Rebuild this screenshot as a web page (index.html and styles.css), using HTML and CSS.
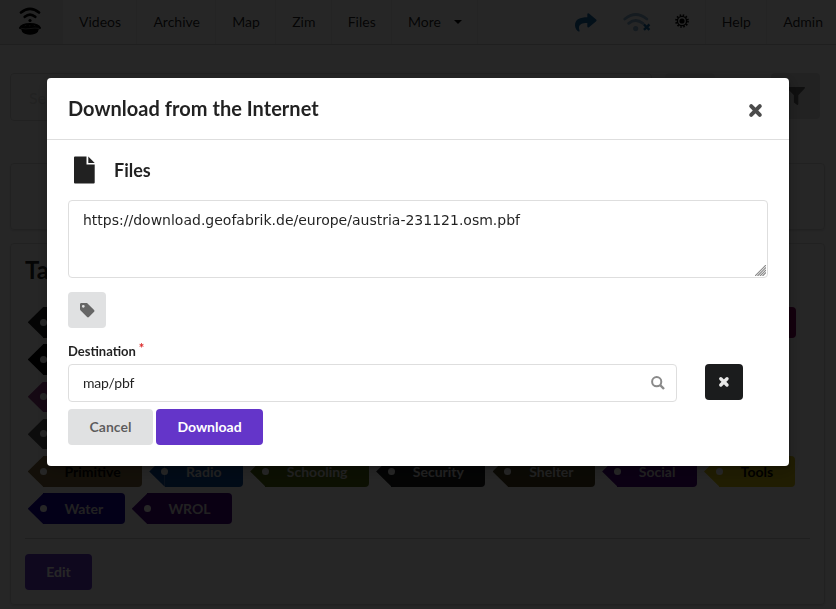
FILE: index.html
```html
<!DOCTYPE html>
<html lang="en">
<head>
<meta charset="utf-8">
<title>Files</title>
<link rel="stylesheet" href="styles.css">
</head>
<body>
<nav class="menu">
  <a class="item brand">
    <svg width="24" height="28" viewBox="0 0 24 28" fill="none" stroke="#000" stroke-width="2.7" stroke-linecap="round">
      <path d="M3 5.5Q12-1.8 21 5.5M6.8 9.8Q12 5.5 17.2 9.8"/>
      <circle cx="12" cy="13.5" r="1.6" fill="#000" stroke="none"/>
      <path d="M.8 21Q3 16 12 16T23.2 21Q22.5 22.3 20.8 22.3L19.8 25Q17 27.8 12 27.8T4.2 25L3.2 22.3Q1.3 22.3.8 21Z" fill="#000" stroke="none"/>
      <path d="M3 21.3Q7 22.5 12 21.6T21 21.3" stroke="#aaa" stroke-width=".7"/>
      <path d="M7 18.8l1-.5M11.8 18.3v.8M16 18.3l1 .5" stroke="#888" stroke-width=".6"/>
    </svg>
  </a>
  <a class="item">Videos</a>
  <a class="item">Archive</a>
  <a class="item">Map</a>
  <a class="item">Zim</a>
  <a class="item">Files</a>
  <a class="item more">More<span class="caret"></span></a>
  <div class="status">
    <svg class="share" width="22" height="19" viewBox="0 0 22 19" fill="#1a6aa8"><path d="M21.2 6.4 14 .4Q12.5-.4 12.3 1.2V4.2C5 4.3 0 6 0 12.5 0 15 1.6 17.4 3.4 18.4 4.4 18.9 4.8 18.3 4.5 17.5 2.5 11.5 6.4 10.2 12.3 10V13.4Q12.5 15 14 14.2L21.2 8.2Q22 7.3 21.2 6.4Z"/></svg>
    <svg class="wifi" width="28" height="19" viewBox="0 0 28 19"><g fill="none" stroke="#1a6aa8" stroke-width="2.8" stroke-linecap="round" opacity=".5"><path d="M1.8 6Q12.7-3 23.8 6M5.7 10.3Q12.7 4.6 19.9 10.3"/><circle cx="12.7" cy="15.6" r="1.2"/></g><path d="m21.8 12.3 3.8 3.8m0-3.8-3.8 3.8" stroke="#1a6aa8" stroke-width="2.4" stroke-linecap="square"/></svg>
    <svg class="gear" width="14" height="14" viewBox="0 0 14 14" fill="none" stroke="#000"><circle cx="7" cy="7" r="4.6" stroke-width="1.4"/><circle cx="7" cy="7" r="2.6" fill="#000" stroke="none"/><circle cx="7" cy="7" r="6" stroke-width="1.7" stroke-dasharray="1.55 1.591"/></svg>
  </div>
  <a class="item right">Help</a>
  <a class="item right">Admin</a>
</nav>

<main>
  <div class="searchrow">
    <div class="search">Se</div>
    <div class="filler"></div>
    <div class="filter"><svg width="18" height="18" viewBox="0 0 18 18" fill="#666"><path d="M.7 0H17.3Q18.5.6 17.6 1.6L11.3 8.2V17Q11 18.3 9.9 17.7L6.9 15.5V8.2L.4 1.6Q-.5.6.7 0Z"/></svg></div>
  </div>
  <section class="panel empty"></section>
  <section class="panel tags">
    <h1>Ta</h1>
    <div class="row"><span class="tag black blank"></span><span class="tag wine wide"></span></div>
    <div class="row"><span class="tag jet blank"></span></div>
    <div class="row"><span class="tag pink blank"></span></div>
    <div class="row"><span class="tag gray blank"></span></div>
    <div class="row"><span class="tag brown">Primitive</span><span class="tag blue">Radio</span><span class="tag green">Schooling</span><span class="tag black">Security</span><span class="tag olive">Shelter</span><span class="tag violet">Social</span><span class="tag yellow">Tools</span></div>
    <div class="row"><span class="tag navy">Water</span><span class="tag purple">WROL</span></div>
    <hr>
    <button class="button primary edit">Edit</button>
  </section>
</main>

<div class="dimmer">
  <div class="modal">
    <header>
      <h2>Download from the Internet</h2>
      <svg width="15" height="15" viewBox="0 0 15 15"><path d="m3.2 3.2 8.6 8.6m0-8.6-8.6 8.6" stroke="#4b4b4b" stroke-width="4" stroke-linecap="round"/></svg>
    </header>
    <div class="content">
      <h3><svg width="21" height="28" viewBox="0 0 21 28" fill="#212121"><path d="M1 .5H12.5V8.5H20.7V26.5Q20.7 27.5 19.7 27.5H1Q0 27.5 0 26.5V1.5Q0 .5 1 .5Z"/><path d="M14.3.5 20.7 6.9H14.3Z"/></svg>Files</h3>
      <div class="field">
        <textarea spellcheck="false">https://download.geofabrik.de/europe/austria-231121.osm.pbf</textarea>
        <svg class="grip" width="11" height="11" viewBox="0 0 11 11" stroke="#8a8a8a" stroke-width="1.2"><path d="M0 11 11 0M2.5 11 11 2.5M5 11 11 5M7.5 11 11 7.5"/></svg>
      </div>
      <button class="button tagbtn"><svg width="15" height="15" viewBox="0 0 15 15" fill="#666"><path fill-rule="evenodd" d="M1.3 0H7L14.1 7Q15 8 14.1 8.8L8.9 14Q8 14.8 7.1 14L.4 7.2 0 6.2V1.3Q.1.1 1.3 0ZM3.3 1.9a1.4 1.4 0 1 0 0 2.8 1.4 1.4 0 0 0 0-2.8Z"/></svg></button>
      <label>Destination<span>*</span></label>
      <div class="destination">
        <div class="input">map/pbf<svg width="14" height="14" viewBox="0 0 14 14" fill="none" stroke="#8a8a8a"><circle cx="5.7" cy="5.7" r="4.6" stroke-width="2"/><path d="m9.2 9.2 3.8 3.8" stroke-width="2.4"/></svg></div>
        <button class="button clear"><svg width="12" height="12" viewBox="0 0 12 12"><path d="m2.8 2.8 6.2 6.2m0-6.2-6.2 6.2" stroke="#e8e8e8" stroke-width="3.4" stroke-linecap="round"/></svg></button>
      </div>
      <div class="actions"><button class="button cancel">Cancel</button><button class="button primary download">Download</button></div>
    </div>
  </div>
</div>
</body>
</html>
```
FILE: styles.css
```css
* { box-sizing: border-box; }
html, body { height: 100%; overflow: hidden; }
body { margin: 0; background: #fff; font: 14px/20px Lato, sans-serif; color: rgba(0,0,0,.87); }
h1, h2, h3 { margin: 0; font-weight: 700; }
svg { display: block; flex: none; }

.menu { display: flex; height: 45px; border-bottom: 1px solid #d0d0d0; font-size: 14px; }
.item { display: flex; align-items: center; padding: 0 15.3px 0 16px; border-right: 1px solid #eee; }
.brand { width: 63px; padding: 0 0 2px 18px; background: #f2f2f2; }
.caret { margin-left: 13px; border: 4px solid transparent; border-top-color: #000; border-bottom: 0; }
.more { padding-right: 15px; }
.status { display: flex; margin-left: auto; padding-top: 13px; }
.wifi { margin-left: 26px; }
.gear { margin: 1px 15.5px 0 24.5px; }
.item.right { border-right: 0; border-left: 1px solid #eee; }
.item.right:last-child { padding-right: 13px; }

main { padding: 28px 10px 0; }
.searchrow { display: flex; height: 48px; }
.search { width: 642px; border: 1px solid #dedede; border-radius: 4px; padding: 14px 18px; font-size: 16px; color: #e0e0e0; }
.filler { width: 50px; height: 46px; margin-left: 13px; background: #f2f2f2; border-radius: 4px; }
.filter { display: flex; align-items: center; width: 49px; height: 46px; margin-left: 56px; padding-left: 16px; background: #e0e1e2; border-radius: 4px; }
.panel { width: 815px; border: 1px solid #dedede; border-radius: 4px; box-shadow: 0 1px 2px rgba(34,36,38,.15); }
.empty { height: 67px; margin-top: 42px; }
.tags { height: 362px; margin-top: 13px; padding: 12px 14px; }
.tags h1 { margin-bottom: 23px; font-size: 24px; line-height: 28px; }
.row { display: flex; height: 37.3px; padding-left: 18px; }
.tag { position: relative; height: 30.5px; margin-right: 22.5px; padding: 0 21.4px 0 21.4px; border-radius: 0 4px 4px 0; font-weight: 700; line-height: 31.5px; color: #ddd; background: var(--c); }
.tag::before { content: ""; position: absolute; left: -15.3px; top: 0; width: 15.5px; height: 100%; background: var(--c); clip-path: polygon(100% 0, 0 50%, 100% 100%); }
.tag::after { content: ""; position: absolute; left: -3.5px; top: 11.5px; width: 7px; height: 7px; border-radius: 50%; background: #fff; }
.blank { width: 100px; }
.wide { width: 130px; margin: 0 0 0 500.5px; }
.black { --c: #1b1c1d; }
.jet { --c: #000; }
.pink { --c: #8f3c80; }
.gray { --c: #555; }
.wine { --c: #80005a; }
.brown { --c: #80683c; color: #000; }
.blue { --c: #0c4a9c; }
.green { --c: #536b12; }
.olive { --c: #4b4020; }
.violet { --c: #4b0082; }
.yellow { --c: #d6c010; color: #000; }
.navy { --c: #1800a0; }
.purple { --c: #470083; }
hr { margin: 7.5px 0 15px; border: 0; border-top: 1px solid #ccc; }

.button { display: flex; align-items: center; justify-content: center; height: 36px; padding: 0; border: 0; border-radius: 4px; background: #e0e1e2; color: rgba(0,0,0,.6); font: 700 14px/14px Lato, sans-serif; }
.primary { background: #6435c9; color: #fff; }
.edit { width: 67px; }

.dimmer { position: fixed; inset: 0; padding: 78px 47px; background: rgba(0,0,0,.85); }
.modal { width: 742px; height: 388px; border-radius: 4px; background: #fff; box-shadow: 1px 3px 3px rgba(0,0,0,.2), 1px 3px 15px 2px rgba(0,0,0,.2); }
.modal header { display: flex; align-items: center; justify-content: space-between; height: 62px; padding: 0 26px 0 21px; border-bottom: 1px solid #dedede; }
.modal h2 { margin-top: -2px; font-size: 20px; line-height: 26px; letter-spacing: .03px; }
.modal header svg { margin-top: 4px; }
.content { padding: 16px 21px 0; }
.modal h3 { display: flex; align-items: center; gap: 19.5px; height: 28px; padding-left: 5.5px; font-size: 18px; }
.field { position: relative; margin: 16px 0 14px; }
textarea { display: block; width: 700px; height: 78px; padding: 10px 14px; border: 1px solid #dedede; border-radius: 4px; outline: 0; resize: none; color: rgba(0,0,0,.87); font: 14px/18px "DejaVu Sans", sans-serif; }
.grip { position: absolute; right: 2px; bottom: 2px; }
.tagbtn { width: 38px; }
label { display: block; height: 20px; margin: 13px 0 3px; font-size: 13px; font-weight: 700; }
label span { position: relative; top: -3px; margin-left: 3px; color: #db2828; }
.destination { display: flex; gap: 28px; }
.input { display: flex; align-items: center; justify-content: space-between; width: 609px; height: 38px; padding: 0 11px 0 14px; border: 1px solid #dedede; border-radius: 4px; letter-spacing: -.2px; }
.clear { width: 38px; background: #1b1c1d; }
.actions { display: flex; gap: 3px; margin-top: 7px; }
.cancel { width: 85px; }
.download { width: 107px; }
```
